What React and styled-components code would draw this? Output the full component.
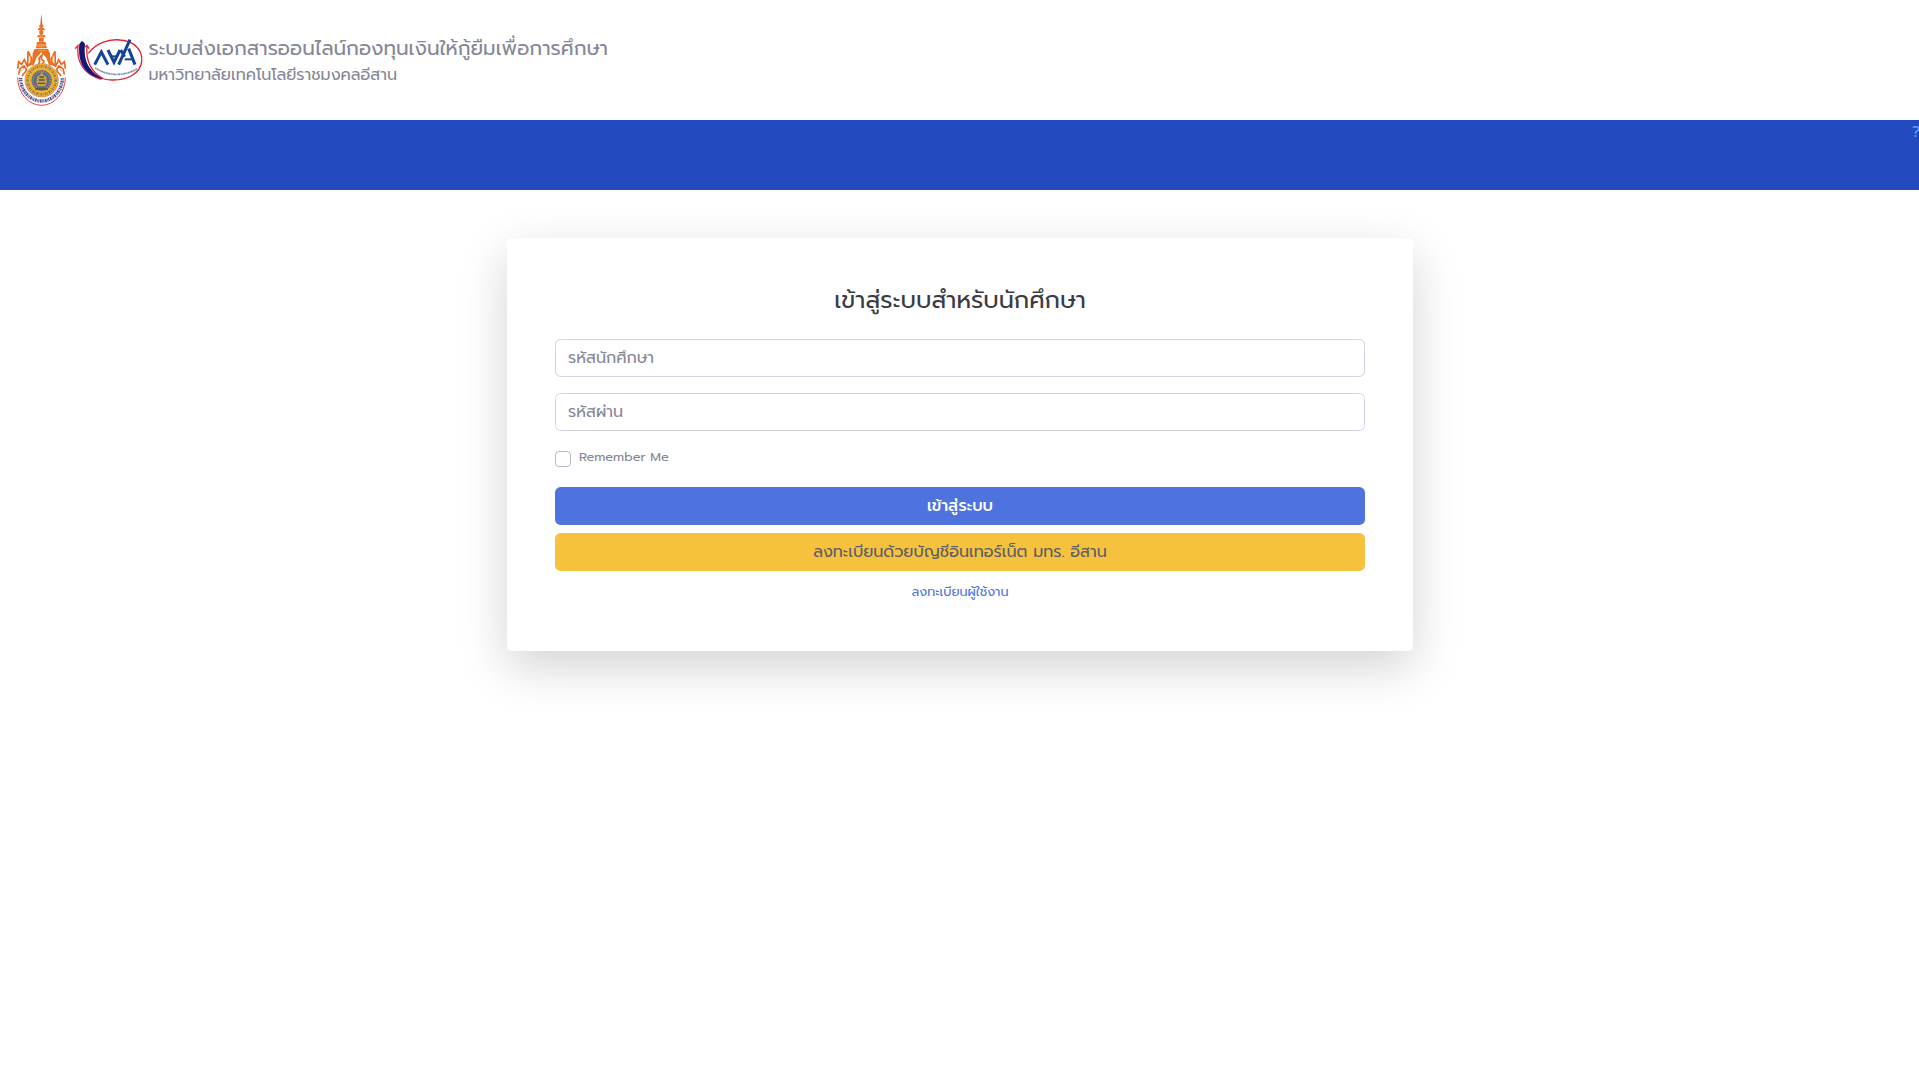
import React from "react";
import styled, { createGlobalStyle } from "styled-components";

const GlobalStyle = createGlobalStyle`
  *, *::before, *::after { box-sizing: border-box; }
  body {
    margin: 0;
    background: #fff;
    color: #858796;
    font-family: Prompt, "Noto Sans Thai", "Noto Sans", "Open Sans", sans-serif;
    font-size: 16px;
    line-height: 1.5;
  }
`;

const Page = styled.div`
  min-height: 100vh;
`;

const Header = styled.header`
  display: flex;
  align-items: flex-start;
  height: 120px;
  padding-left: 16px;
`;

const Emblem = styled.svg`
  width: 51px;
  height: 94px;
  margin-top: 13px;
`;

const FundLogo = styled.svg`
  width: 70px;
  height: 44px;
  margin: 38px 0 0 7px;
`;

const Titles = styled.div`
  display: flex;
  flex-direction: column;
  padding: 33px 0 0 4.5px;
`;

const Line = styled.span`
  display: block;
  white-space: nowrap;
  font-size: ${(p) => p.$size || 16}px;
  line-height: ${(p) => p.$height || 24}px;
  font-weight: ${(p) => p.$weight || 400};
`;

const NavBar = styled.nav`
  display: flex;
  justify-content: flex-end;
  height: 70px;
  background: #224abe;
  overflow: hidden;
`;

const HelpLink = styled.a`
  width: 7px;
  color: #58a6f5;
  font-size: 16px;
  line-height: 24px;
`;

const Card = styled.main`
  width: 906px;
  height: 413px;
  margin: 48px auto 0 507px;
  padding: 48px;
  border-radius: 5px;
  background: #fff;
  box-shadow: 0 16px 48px rgba(0, 0, 0, 0.175);
`;

const Heading = styled.h1`
  display: flex;
  justify-content: center;
  margin: 0 0 24px;
  color: #3a3b45;
  height: 29px;
`;

const Form = styled.form`
  display: flex;
  flex-direction: column;
`;

const Field = styled.label`
  display: flex;
  align-items: center;
  height: 38px;
  margin-bottom: 16px;
  padding: 0 12px;
  border: 1px solid #d1d3e2;
  border-radius: 5.6px;
`;

const Remember = styled.label`
  display: flex;
  gap: 8px;
  height: 40px;
`;

const Box = styled.span`
  width: 16px;
  height: 16px;
  margin-top: 4px;
  border: 1px solid #b7b9cc;
  border-radius: 4px;
`;

const Button = styled.button`
  display: flex;
  align-items: center;
  justify-content: center;
  height: 38px;
  margin: 0 0 8px;
  padding: 0;
  border: 0;
  border-radius: 5.6px;
  font-family: inherit;
  color: ${(p) => p.$ink};
  background: ${(p) => p.$fill};
`;

const Register = styled.a`
  display: flex;
  justify-content: center;
  padding-top: 1px;
  color: #4e73df;
`;

function UniversityEmblem() {
  return (
    <Emblem viewBox="48 39 153 282">
      <path d="M121 72l3-31 3 31v40h-6z" fill="#e0642a" />
      <g fill="#e97224">
        <path d="M119 74h10l2 8h-14zM116 84h16l3 7h-22zM118 93h12v10h-12zM114 105h20l3 7h-26zM117 113h14v12h-14z" />
        <path d="M112 126h24l4 8h-32zM110 136h28l3 9h-34z" />
        <path d="M104 147h40l6 13 1 20 8 16h-12l-8-22-15-18-15 18-8 22H89l8-16 1-20z" />
      </g>
      <g fill="none" stroke="#e56b22" strokeWidth="5">
        <path d="M83 196l1-42 12 24-8 20M166 196l-1-42-12 24 8 20" />
        <path d="M53 206l3-21 9 8 8-14 9 20 8-8M196 206l-3-21-9 8-8-14-9 20-8-8" />
        <path d="M56 224l4-18 12-8 8 12-14 18M193 224l-4-18-12-8-8 12 14 18" />
        <path d="M114 196l5-12-2-9 9-10-2 13 8 5-4 8 7 5" />
      </g>
      <g fill="none" stroke="#f3a13a" strokeWidth="3">
        <path d="M62 214l10-8M187 214l-10-8M91 165v22M158 165v22M113 152h23M116 140h16M118 108h12" />
      </g>
      <path d="M53 236a71 80 0 0 0 143 0z" fill="#fff" />
      <path d="M53 232a71.5 84 0 0 0 143 0" fill="none" stroke="#de4552" strokeWidth="3" />
      <path d="M62 234a62.5 69 0 0 0 125 0" fill="none" stroke="#52528f" strokeWidth="10" strokeDasharray="3 2 5 2 2 1.5" />
      <circle cx="125" cy="241" r="50" fill="#f2b22b" stroke="#c77a58" strokeWidth="2" />
      <circle cx="125" cy="241" r="42" fill="none" stroke="#7d7468" strokeWidth="8" strokeDasharray="4 4 2 3" />
      <circle cx="125" cy="241" r="33" fill="#5f6a88" stroke="#efb42e" strokeWidth="4" />
      <circle cx="125" cy="241" r="26" fill="none" stroke="#a8985c" strokeWidth="5" strokeDasharray="3 4" />
      <path d="M125 211l4 13 9 5 3 16-5 14h-22l-5-14 3-16 9-5z" fill="#c9a441" />
      <path d="M118 231h14M116 240h18M114 250h22M106 267h38" stroke="#555043" strokeWidth="4" />
    </Emblem>
  );
}

function LoanFundLogo() {
  return (
    <FundLogo viewBox="222 114 210 132">
      <path d="M265 160c22-31 62-44 96-40 42 3 68 31 64 65-4 36-43 56-89 55-18 0-34-5-48-12" fill="none" stroke="#e2202f" strokeWidth="4" />
      <path d="M225 146l9-9c-5 45 14 86 70 101M254 142l7-6 6 10M261 138c-4 42 12 77 48 98" fill="none" stroke="#e52c3c" strokeWidth="4" />
      <path d="M238 132l8-10 9 9c-4 43 3 77 55 107-42-9-79-34-72-106z" fill="#151775" />
      <g fill="none" stroke="#15439c" strokeWidth="9" strokeLinejoin="miter">
        <path d="M284 194l20-38 20 38" />
        <path d="M324 150l18 37 18-37" />
        <path d="M330 169h24" strokeWidth="6" />
        <path d="M356 194l34-75M362 150l12 20M386 146l19 48" />
        <path d="M374 178h22" strokeWidth="6" />
      </g>
      <path d="M286 204c38 25 87 26 126 2" fill="none" stroke="#6671a8" strokeWidth="5" strokeDasharray="3 1.5 2 1" />
    </FundLogo>
  );
}

export default function App() {
  return (
    <Page>
      <GlobalStyle />
      <Header>
        <UniversityEmblem />
        <LoanFundLogo />
        <Titles>
          <Line $size={20} $height={30}>ระบบส่งเอกสารออนไลน์กองทุนเงินให้กู้ยืมเพื่อการศึกษา</Line>
          <Line>มหาวิทยาลัยเทคโนโลยีราชมงคลอีสาน</Line>
        </Titles>
      </Header>
      <NavBar>
        <HelpLink>?</HelpLink>
      </NavBar>
      <Card>
        <Heading><Line $size={24} $height={29}>เข้าสู่ระบบสำหรับนักศึกษา</Line></Heading>
        <Form>
          <Field><Line>รหัสนักศึกษา</Line></Field>
          <Field><Line>รหัสผ่าน</Line></Field>
          <Remember><Box /><Line $size={12.8} $height={20}>Remember Me</Line></Remember>
          <Button type="button" $ink="#fff" $fill="#4e73df"><Line $weight={500}>เข้าสู่ระบบ</Line></Button>
          <Button type="button" $ink="#5a5c69" $fill="#f6c23e"><Line>ลงทะเบียนด้วยบัญชีอินเทอร์เน็ต มทร. อีสาน</Line></Button>
          <Register><Line $size={12.8}>ลงทะเบียนผู้ใช้งาน</Line></Register>
        </Form>
      </Card>
    </Page>
  );
}
